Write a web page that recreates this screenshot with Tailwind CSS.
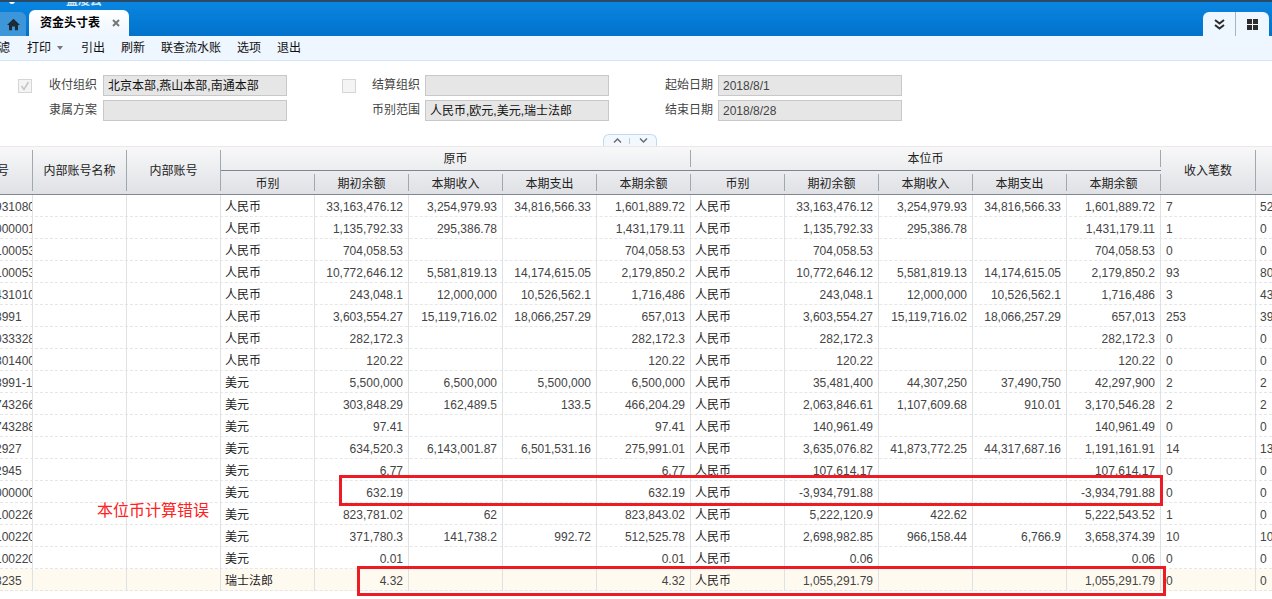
<!DOCTYPE html>
<html lang="en">
<head>
  <meta charset="UTF-8" />
  <title>资金头寸表</title>
  <script src="https://cdn.jsdelivr.net/npm/@tailwindcss/browser@4"></script>
</head>
<body class="w-[1272px] h-[599px] overflow-hidden bg-white relative text-[12px] text-[#222] font-['Liberation_Sans','Noto_Sans_CJK_SC',sans-serif]">

  <!-- Top bar with tabs -->
  <div class="h-9 relative overflow-hidden border-t-2 border-[#2a4a68] bg-gradient-to-b from-[#0a86e0] to-[#0272cc] flex items-end">
    <div class="absolute left-[66px] -top-[10px] text-[12px] font-bold text-[#cfe6fa]">蓝凌云</div>
    <div class="absolute left-[9px] -top-[4px] w-[6px] h-[6px] rounded-full bg-white"></div>
    <div class="w-[26px] h-[24px] rounded-tr-md bg-[#3d96da] flex items-center justify-center">
      <svg class="w-[13px] h-[13px]" viewBox="0 0 16 16"><path d="M8 1 L16 8.5 H13.5 V15 H9.8 V10.5 H6.2 V15 H2.5 V8.5 H0 Z" fill="#1d2b36"/></svg>
    </div>
    <div class="ml-[3px] w-[100px] h-[26px] rounded-t-md bg-gradient-to-b from-white to-[#eef6ff] flex items-center pl-[11px]">
      <span class="font-bold text-[12px] text-black">资金头寸表</span>
      <svg class="ml-[12px] w-[8px] h-[8px]" viewBox="0 0 8 8"><path d="M1 1 L7 7 M7 1 L1 7" stroke="#777" stroke-width="2"/></svg>
    </div>
    <div class="ml-auto mr-[3px] w-[66px] h-[24px] rounded-t-md bg-[#eef6ff] flex items-center">
      <div class="w-[33px] h-full flex items-center justify-center border-r border-[#a9b4bd]">
        <svg class="w-[11px] h-[11px]" viewBox="0 0 11 11"><path d="M1 1 L5.5 4.5 L10 1 M1 6 L5.5 9.5 L10 6" fill="none" stroke="#2b2b2b" stroke-width="2"/></svg>
      </div>
      <div class="flex-1 flex items-center justify-center">
        <svg class="w-[11px] h-[11px]" viewBox="0 0 11 11"><path d="M0 0H5V5H0Z M6 0H11V5H6Z M0 6H5V11H0Z M6 6H11V11H6Z" fill="#2b2b2b"/></svg>
      </div>
    </div>
  </div>

  <!-- Toolbar -->
  <div class="h-[25px] bg-[#eef6ff] border-b border-[#d3e5f7] flex items-center text-[12px] text-[#111]">
    <span class="-ml-[2px] w-[12px] overflow-hidden">滤</span>
    <span class="ml-[17px]">打印</span>
    <span class="ml-[6px] w-0 h-0 border-x-[3px] border-x-transparent border-t-[4px] border-t-[#777]"></span>
    <span class="ml-[18px]">引出</span>
    <span class="ml-4">刷新</span>
    <span class="ml-4">联查流水账</span>
    <span class="ml-4">选项</span>
    <span class="ml-4">退出</span>
  </div>

  <!-- Filter form -->
  <div class="h-[73px] pl-[18px] pt-[14px] flex text-[#444]">
    <div class="w-[269px] grid grid-cols-[14px_17px_54px_184px] grid-rows-[21px_21px] gap-y-[4px] items-center">
      <span class="col-start-1 w-[14px] h-[14px] border border-[#d5d5d5] bg-[#f4f4f4] flex items-center justify-center">
        <svg class="w-[10px] h-[10px]" viewBox="0 0 10 10"><path d="M1.5 5 L4 8.5 L8.5 1" fill="none" stroke="#c4c4c4" stroke-width="1.5"/></svg>
      </span>
      <span class="col-start-3 pb-[2px]">收付组织</span>
      <div class="h-[21px] bg-[#e6e6e6] border border-[#c8c8c8] px-[4px] leading-[20px] text-[#111]">北京本部,燕山本部,南通本部</div>
      <span class="col-start-3 pb-[2px]">隶属方案</span>
      <div class="h-[21px] bg-[#e6e6e6] border border-[#c8c8c8]"></div>
    </div>
    <div class="ml-[55px] w-[267px] grid grid-cols-[14px_16px_53px_184px] grid-rows-[21px_21px] gap-y-[4px] items-center">
      <span class="col-start-1 w-[14px] h-[14px] border border-[#d5d5d5] bg-[#f4f4f4]"></span>
      <span class="col-start-3 pb-[2px]">结算组织</span>
      <div class="h-[21px] bg-[#e6e6e6] border border-[#c8c8c8]"></div>
      <span class="col-start-3 pb-[2px]">币别范围</span>
      <div class="h-[21px] bg-[#e6e6e6] border border-[#c8c8c8] px-[4px] leading-[20px] text-[#111]">人民币,欧元,美元,瑞士法郎</div>
    </div>
    <div class="ml-[56px] grid grid-cols-[53px_184px] grid-rows-[21px_21px] gap-y-[4px] items-center">
      <span class="pb-[2px]">起始日期</span>
      <div class="h-[21px] bg-[#e6e6e6] border border-[#c8c8c8] px-[4px] leading-[20px]">2018/8/1</div>
      <span class="pb-[2px]">结束日期</span>
      <div class="h-[21px] bg-[#e6e6e6] border border-[#c8c8c8] px-[4px] leading-[20px]">2018/8/28</div>
    </div>
  </div>

  <!-- Collapse handle -->
  <div class="h-[12px] flex justify-start pl-[603px]">
    <div class="w-[54px] h-[12px] rounded-t-md border border-b-0 border-[#bcdcf2] bg-[#f3f8fc] flex items-center">
      <svg class="ml-[9px] w-[9px] h-[5px]" viewBox="0 0 9 5"><path d="M1 4.5 L4.5 1 L8 4.5" fill="none" stroke="#667" stroke-width="1.4"/></svg>
      <span class="ml-[7px] w-px h-[6px] bg-[#bcd]"></span>
      <svg class="ml-[9px] w-[9px] h-[5px]" viewBox="0 0 9 5"><path d="M1 .5 L4.5 4 L8 .5" fill="none" stroke="#667" stroke-width="1.4"/></svg>
    </div>
  </div>

  <!-- Grid header -->
  <div class="h-[49px] border-t border-[#ece6ec] border-b border-b-[#7f8890] overflow-hidden bg-gradient-to-b from-[#f8f8f9] to-[#dfe1e5] text-[#222] grid grid-cols-[33px_repeat(12,94px)_95px_120px] grid-rows-[24px_23px] text-center">
    <div class="col-start-1 row-start-1 row-span-2 flex items-center justify-start overflow-hidden my-[3px] border-r border-[#a0a8b0]"><span class="-ml-[3px]">号</span></div>
    <div class="col-start-2 row-start-1 row-span-2 flex items-center justify-center my-[3px] border-r border-[#a0a8b0]">内部账号名称</div>
    <div class="col-start-3 row-start-1 row-span-2 flex items-center justify-center my-[3px] border-r border-[#a0a8b0]">内部账号</div>
    <div class="col-start-4 row-start-1 col-span-5 border-b border-[#7f8890]"><div class="mt-[3px] h-[17px] flex items-center justify-center border-r border-[#a0a8b0]">原币</div></div>
    <div class="col-start-9 row-start-1 col-span-5 border-b border-[#7f8890]"><div class="mt-[3px] h-[17px] flex items-center justify-center border-r border-[#a0a8b0]">本位币</div></div>
    <div class="col-start-14 row-start-1 row-span-2 flex items-center justify-center my-[3px] border-r border-[#a0a8b0]">收入笔数</div>
    <div class="col-start-4 row-start-2 flex items-center justify-center my-[3px] pt-[2px] border-r border-[#a0a8b0]">币别</div>
    <div class="col-start-5 row-start-2 flex items-center justify-center my-[3px] pt-[2px] border-r border-[#a0a8b0]">期初余额</div>
    <div class="col-start-6 row-start-2 flex items-center justify-center my-[3px] pt-[2px] border-r border-[#a0a8b0]">本期收入</div>
    <div class="col-start-7 row-start-2 flex items-center justify-center my-[3px] pt-[2px] border-r border-[#a0a8b0]">本期支出</div>
    <div class="col-start-8 row-start-2 flex items-center justify-center my-[3px] pt-[2px] border-r border-[#a0a8b0]">本期余额</div>
    <div class="col-start-9 row-start-2 flex items-center justify-center my-[3px] pt-[2px] border-r border-[#a0a8b0]">币别</div>
    <div class="col-start-10 row-start-2 flex items-center justify-center my-[3px] pt-[2px] border-r border-[#a0a8b0]">期初余额</div>
    <div class="col-start-11 row-start-2 flex items-center justify-center my-[3px] pt-[2px] border-r border-[#a0a8b0]">本期收入</div>
    <div class="col-start-12 row-start-2 flex items-center justify-center my-[3px] pt-[2px] border-r border-[#a0a8b0]">本期支出</div>
    <div class="col-start-13 row-start-2 flex items-center justify-center my-[3px] pt-[2px] border-r border-[#a0a8b0]">本期余额</div>
  </div>

  <!-- Grid rows -->
  <div id="rows"></div>

  <!-- Annotations drawn over the grid -->
  <div class="absolute left-[339px] top-[475px] w-[824px] h-[31px] border-[3px] border-[#ed1c24]"></div>
  <div class="absolute left-[357px] top-[566px] w-[809px] h-[30px] border-[3px] border-[#ed1c24]"></div>
  <div class="absolute left-[97px] top-[501px] text-[16px] leading-[20px] text-[#ff2020]">本位币计算错误</div>

  <script>
    const rmb = "人民币", usd = "美元", chf = "瑞士法郎";
    const data = [
      ["9310801", rmb, "33,163,476.12", "3,254,979.93", "34,816,566.33", "1,601,889.72", "33,163,476.12", "3,254,979.93", "34,816,566.33", "1,601,889.72", "7", "52"],
      ["000001", rmb, "1,135,792.33", "295,386.78", "", "1,431,179.11", "1,135,792.33", "295,386.78", "", "1,431,179.11", "1", "0"],
      ["100053", rmb, "704,058.53", "", "", "704,058.53", "704,058.53", "", "", "704,058.53", "0", "0"],
      ["100053", rmb, "10,772,646.12", "5,581,819.13", "14,174,615.05", "2,179,850.2", "10,772,646.12", "5,581,819.13", "14,174,615.05", "2,179,850.2", "93", "80"],
      ["4310101", rmb, "243,048.1", "12,000,000", "10,526,562.1", "1,716,486", "243,048.1", "12,000,000", "10,526,562.1", "1,716,486", "3", "43"],
      ["8991", rmb, "3,603,554.27", "15,119,716.02", "18,066,257.29", "657,013", "3,603,554.27", "15,119,716.02", "18,066,257.29", "657,013", "253", "39"],
      ["0333281", rmb, "282,172.3", "", "", "282,172.3", "282,172.3", "", "", "282,172.3", "0", "0"],
      ["8014001", rmb, "120.22", "", "", "120.22", "120.22", "", "", "120.22", "0", "0"],
      ["8991-1", usd, "5,500,000", "6,500,000", "5,500,000", "6,500,000", "35,481,400", "44,307,250", "37,490,750", "42,297,900", "2", "2"],
      ["7432661", usd, "303,848.29", "162,489.5", "133.5", "466,204.29", "2,063,846.61", "1,107,609.68", "910.01", "3,170,546.28", "2", "2"],
      ["7432881", usd, "97.41", "", "", "97.41", "140,961.49", "", "", "140,961.49", "0", "0"],
      ["2927", usd, "634,520.3", "6,143,001.87", "6,501,531.16", "275,991.01", "3,635,076.82", "41,873,772.25", "44,317,687.16", "1,191,161.91", "14", "13"],
      ["2945", usd, "6.77", "", "", "6.77", "107,614.17", "", "", "107,614.17", "0", "0"],
      ["0000001", usd, "632.19", "", "", "632.19", "-3,934,791.88", "", "", "-3,934,791.88", "0", "0"],
      ["100226", usd, "823,781.02", "62", "", "823,843.02", "5,222,120.9", "422.62", "", "5,222,543.52", "1", "0"],
      ["100220", usd, "371,780.3", "141,738.2", "992.72", "512,525.78", "2,698,982.85", "966,158.44", "6,766.9", "3,658,374.39", "10", "10"],
      ["100220", usd, "0.01", "", "", "0.01", "0.06", "", "", "0.06", "0", "0"],
      ["8235", chf, "4.32", "", "", "4.32", "1,055,291.79", "", "", "1,055,291.79", "0", "0"],
    ];

    const cell = "h-[22px] leading-[24px] border-r border-[#dfe2e5] overflow-hidden whitespace-nowrap";
    const dark = "text-[#222] pl-[4px]";
    const num = "text-right pr-[5px] text-[#444]";
    let html = "";
    data.forEach((r, i) => {
      const bg = i === data.length - 1 ? "bg-[#fffaf0]" : "";
      html += `<div class="grid grid-cols-[33px_repeat(12,94px)_95px_120px] h-[22px] border-b border-dashed border-[#e6e6e6] ${bg}">
        <div class="${cell} text-[#444] -indent-[5px]">${r[0]}</div>
        <div class="${cell}"></div><div class="${cell}"></div>
        <div class="${cell} ${dark}">${r[1]}</div>
        <div class="${cell} ${num}">${r[2]}</div><div class="${cell} ${num}">${r[3]}</div><div class="${cell} ${num}">${r[4]}</div><div class="${cell} ${num}">${r[5]}</div>
        <div class="${cell} ${dark}">人民币</div>
        <div class="${cell} ${num}">${r[6]}</div><div class="${cell} ${num}">${r[7]}</div><div class="${cell} ${num}">${r[8]}</div><div class="${cell} ${num}">${r[9]}</div>
        <div class="${cell} pl-[5px] text-[#444]">${r[10]}</div>
        <div class="pl-[4px] leading-[24px] text-[#444]">${r[11]}</div>
      </div>`;
    });
    document.getElementById("rows").innerHTML = html;
  </script>
</body>
</html>
